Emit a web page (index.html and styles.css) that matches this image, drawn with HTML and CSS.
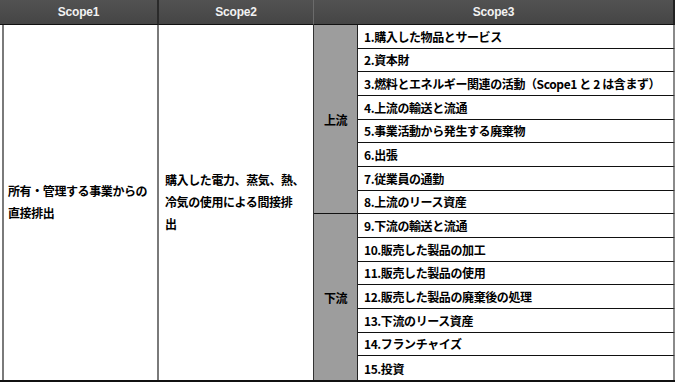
FILE: index.html
```html
<!DOCTYPE html>
<html lang="ja">
<head>
<meta charset="utf-8">
<title>Scope1・2・3</title>
<link rel="stylesheet" href="styles.css">
</head>
<body>
<div class="sheet">
  <div class="head h1">Scope1</div>
  <div class="head h2">Scope2</div>
  <div class="head h3">Scope3</div>

  <div class="cell own">所有・管理する事業からの<br>直接排出</div>
  <div class="cell bought">購入した電力、蒸気、熱、<br>冷気の使用による間接排<br>出</div>

  <div class="stream up">上流</div>
  <div class="stream down">下流</div>

  <div class="item">1.購入した物品とサービス</div>
  <div class="item">2.資本財</div>
  <div class="item">3.燃料とエネルギー関連の活動（Scope1 と 2 は含まず）</div>
  <div class="item">4.上流の輸送と流通</div>
  <div class="item">5.事業活動から発生する廃棄物</div>
  <div class="item">6.出張</div>
  <div class="item">7.従業員の通勤</div>
  <div class="item">8.上流のリース資産</div>
  <div class="item">9.下流の輸送と流通</div>
  <div class="item">10.販売した製品の加工</div>
  <div class="item">11.販売した製品の使用</div>
  <div class="item">12.販売した製品の廃棄後の処理</div>
  <div class="item">13.下流のリース資産</div>
  <div class="item">14.フランチャイズ</div>
  <div class="item">15.投資</div>
</div>
</body>
</html>
```

FILE: styles.css
```css
body {
  margin: 0;
  background: #fff;
}

/* emission scope table: header row + 15 category rows */
.sheet {
  display: grid;
  width: 675px;
  height: 380px;
  grid-template-columns: 159px 155px 44px 317px;
  grid-template-rows: 25px repeat(15, 1fr);
  border-bottom: 2px solid #111;
  font-family: "Noto Sans CJK JP", sans-serif;
  font-weight: 700;
  font-size: 12px;
  letter-spacing: -0.4px;
  color: #000;
}

.head {
  grid-row: 1;
  display: flex;
  align-items: center;
  justify-content: center;
  background: linear-gradient(#525252, #454545);
  color: #f2f2f2;
  font-family: "Liberation Sans Narrow", "Liberation Sans", sans-serif;
  font-size: 12px;
  font-weight: 700;
  letter-spacing: -0.2px;
  border-bottom: 1px solid #111;
}

.h1 {
  grid-column: 1;
  border-right: 2px solid #2a2a2a;
}

.h2 {
  grid-column: 2;
  border-right: 1px solid #6b6b6b;
}

.h3 {
  grid-column: 3 / 5;
  border-right: 2px solid #222;
}

.cell {
  grid-row: 2 / span 15;
  display: flex;
  align-items: center;
  line-height: 22px;
  white-space: nowrap;
}

.own {
  grid-column: 1;
  padding-left: 8px;
  border-right: 2px solid #7a7a7a;
  box-shadow: inset 2px 0 0 #fff, inset 4px 0 0 #7a7a7a;
}

.bought {
  grid-column: 2;
  padding-left: 6px;
  border-right: 1px solid #333;
}

.stream {
  grid-column: 3;
  display: flex;
  align-items: center;
  justify-content: center;
  background: #9d9d9d;
  border-right: 1px solid #222;
}

.up {
  grid-row: 2 / span 8;
  border-bottom: 1px solid #111;
}

.down {
  grid-row: 10 / span 7;
}

.item {
  grid-column: 4;
  display: flex;
  align-items: center;
  padding-left: 6px;
  white-space: nowrap;
  border-bottom: 1px solid #111;
  border-right: 2px solid #8a8a8a;
}

.item:last-child {
  border-bottom: 0;
}
```
